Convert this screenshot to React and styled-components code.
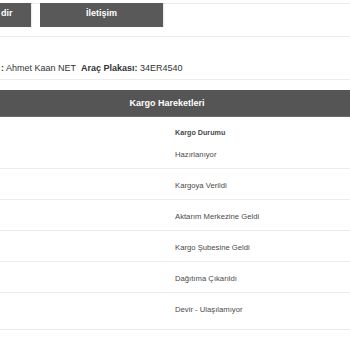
import React from 'react';
import styled, { createGlobalStyle } from 'styled-components';

const GlobalStyle = createGlobalStyle`
  body {
    margin: 0;
    background: #fff;
    font-family: "Liberation Sans", Arial, sans-serif;
    overflow: hidden;
  }
`;

const Page = styled.div`
  width: 350px;
  height: 350px;
  overflow: hidden;
`;

const Nav = styled.div`
  display: flex;
  gap: 9px;
  margin-top: 3px;
  padding-bottom: 9px;
  border-top: 1px solid #ececec;
  border-bottom: 1px solid #ececec;
`;

const NavButton = styled.div`
  width: ${(p) => p.$width}px;
  height: 24px;
  box-sizing: border-box;
  margin-top: -1px;
  padding: 3px ${(p) => (p.$left ? '0 0 1px' : '0')};
  background: #595959;
  color: #fff;
  font-size: 9px;
  font-weight: bold;
  line-height: 14px;
  text-align: ${(p) => (p.$left ? 'left' : 'center')};
  box-shadow: 1px 0 1px rgba(0, 0, 0, 0.08);
`;

const Info = styled.div`
  padding: 24px 0 4px 1px;
  line-height: 14px;
  font-size: 9px;
  color: #333;
  border-bottom: 1px solid #ececec;
`;

const Label = styled.b`
  margin-left: ${(p) => (p.$gap ? '5px' : '0')};
`;

const Header = styled.div`
  margin-top: 10px;
  height: 27px;
  line-height: 27px;
  background: #555;
  border-bottom: 1px solid #6a6a6a;
  box-sizing: border-box;
  color: #fff;
  font-size: 9px;
  font-weight: bold;
  text-align: center;
  padding-right: 16px;
`;

const Row = styled.div`
  display: grid;
  grid-template-columns: 175px 1fr;
  padding: ${(p) => (p.$head ? '11px 0 0' : `11px 0 ${p.$last ? 13 : 7}px`)};
  line-height: ${(p) => (p.$head ? '10px' : '12px')};
  border-bottom: ${(p) => (p.$head ? 'none' : '1px solid #ececec')};
  font-size: ${(p) => (p.$head ? '7.2px' : '7.7px')};
  font-weight: ${(p) => (p.$head ? 'bold' : 'normal')};
  color: #4a4a4a;
`;

const movements = [
  'Hazırlanıyor',
  'Kargoya Verildi',
  'Aktarım Merkezine Geldi',
  'Kargo Şubesine Geldi',
  'Dağıtıma Çıkarıldı',
  'Devir - Ulaşılamıyor',
];

const App = () => {
  return (
    <Page>
      <GlobalStyle />
      <Nav>
        <NavButton $width={31} $left>dir</NavButton>
        <NavButton $width={123}>İletişim</NavButton>
      </Nav>
      <Info>
        <Label>:</Label> Ahmet Kaan NET
        <Label $gap>Araç Plakası:</Label> 34ER4540
      </Info>
      <Header>Kargo Hareketleri</Header>
      <Row $head>
        <span />
        <span>Kargo Durumu</span>
      </Row>
      {movements.map((m, i) => (
        <Row key={m} $last={i === movements.length - 1}>
          <span />
          <span>{m}</span>
        </Row>
      ))}
    </Page>
  );
};

export default App;
